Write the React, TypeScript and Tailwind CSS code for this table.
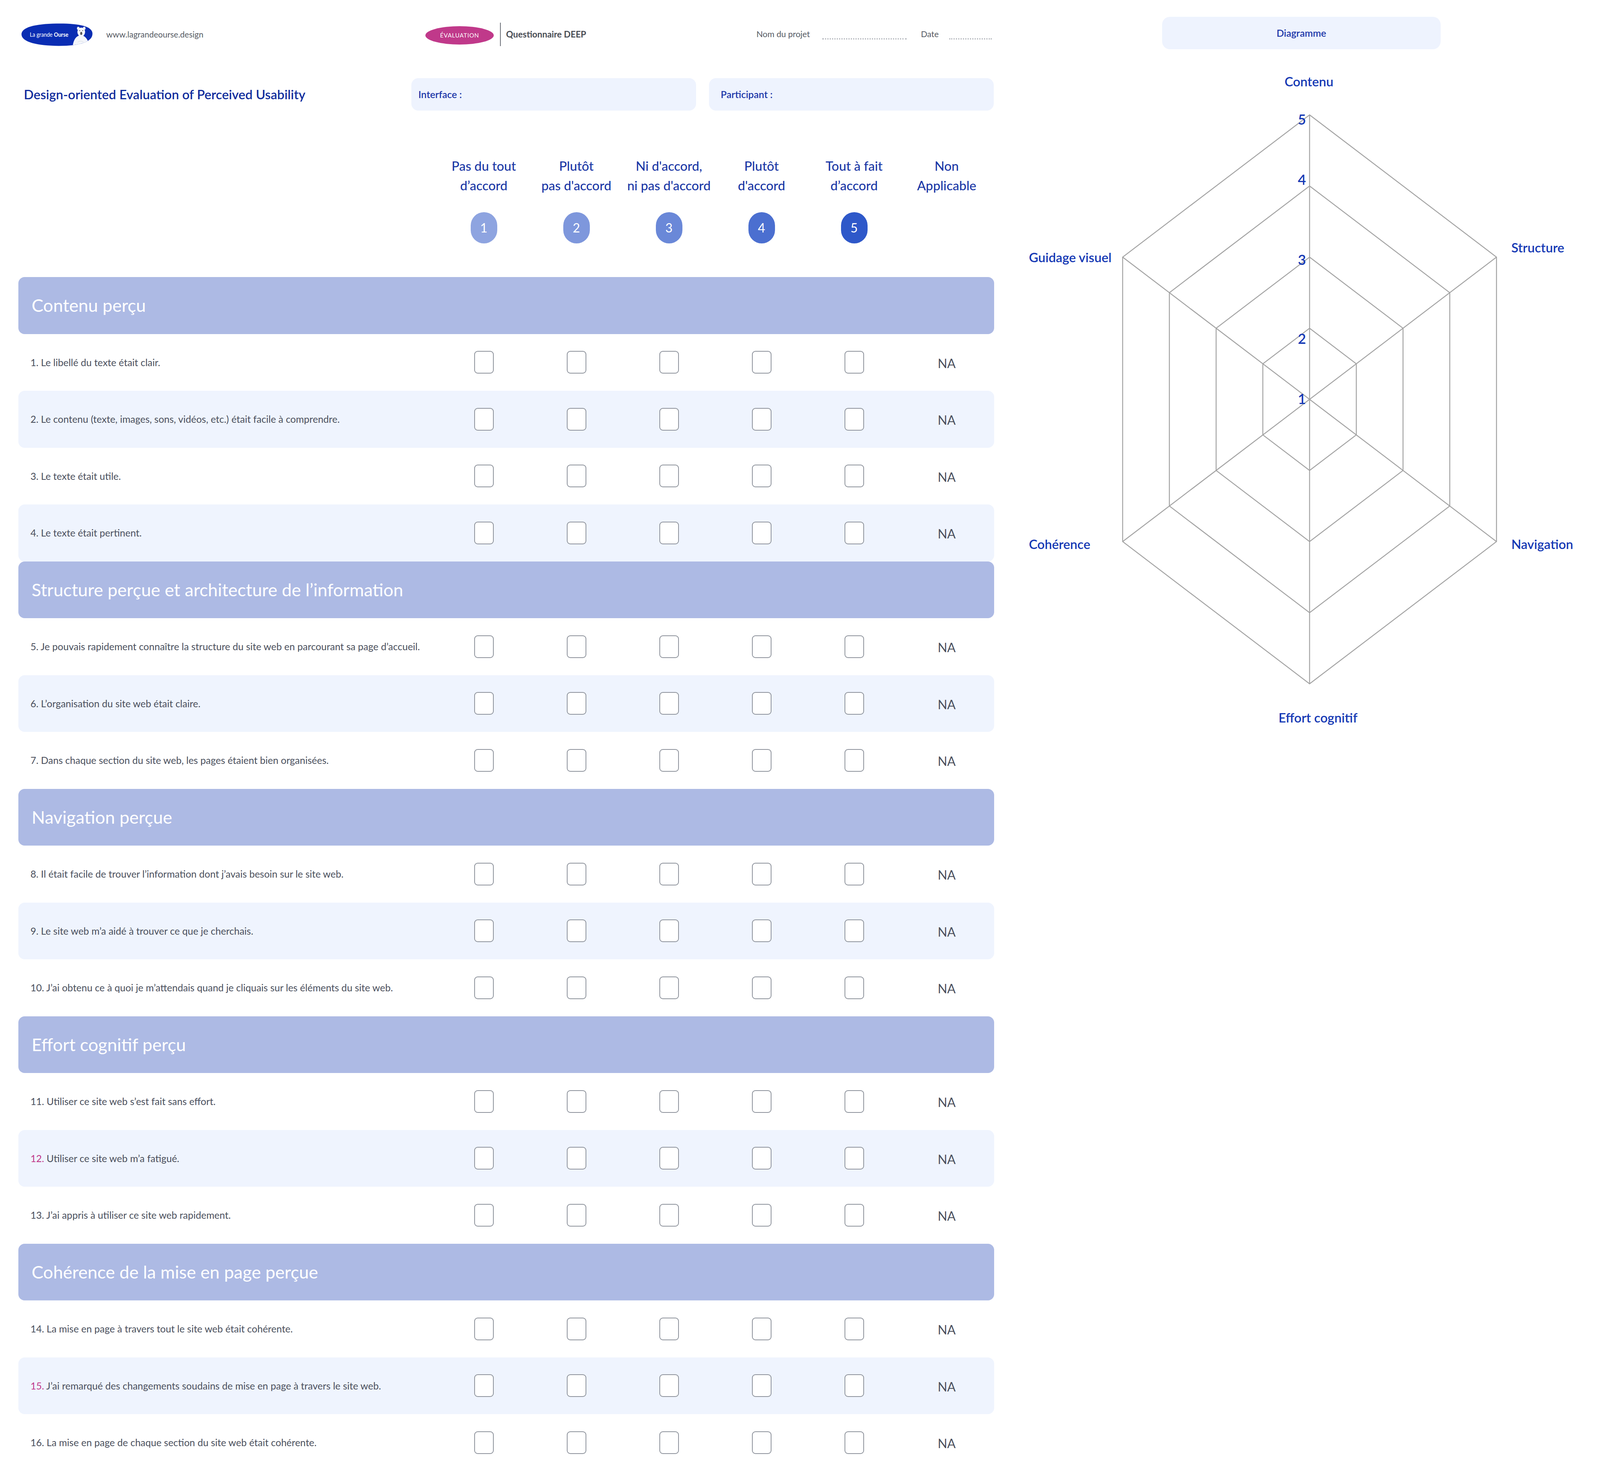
import React from "react";

const sections = [
  {
    title: "Contenu perçu",
    items: [
      { n: 1, t: "Le libellé du texte était clair." },
      { n: 2, t: "Le contenu (texte, images, sons, vidéos, etc.) était facile à comprendre." },
      { n: 3, t: "Le texte était utile." },
      { n: 4, t: "Le texte était pertinent." },
    ],
  },
  {
    title: "Structure perçue et architecture de l’information",
    items: [
      { n: 5, t: "Je pouvais rapidement connaître la structure du site web en parcourant sa page d’accueil." },
      { n: 6, t: "L’organisation du site web était claire." },
      { n: 7, t: "Dans chaque section du site web, les pages étaient bien organisées." },
    ],
  },
  {
    title: "Navigation perçue",
    items: [
      { n: 8, t: "Il était facile de trouver l’information dont j’avais besoin sur le site web." },
      { n: 9, t: "Le site web m’a aidé à trouver ce que je cherchais." },
      { n: 10, t: "J’ai obtenu ce à quoi je m’attendais quand je cliquais sur les éléments du site web." },
    ],
  },
  {
    title: "Effort cognitif perçu",
    items: [
      { n: 11, t: "Utiliser ce site web s’est fait sans effort." },
      { n: 12, t: "Utiliser ce site web m’a fatigué.", reverse: true },
      { n: 13, t: "J’ai appris à utiliser ce site web rapidement." },
    ],
  },
  {
    title: "Cohérence de la mise en page perçue",
    items: [
      { n: 14, t: "La mise en page à travers tout le site web était cohérente." },
      { n: 15, t: "J’ai remarqué des changements soudains de mise en page à travers le site web.", reverse: true },
      { n: 16, t: "La mise en page de chaque section du site web était cohérente." },
    ],
  },
];

const scale = [
  { label: ["Pas du tout", "d’accord"], color: "bg-[#8ea4e0]" },
  { label: ["Plutôt", "pas d'accord"], color: "bg-[#7e97dc]" },
  { label: ["Ni d'accord,", "ni pas d'accord"], color: "bg-[#6a88d8]" },
  { label: ["Plutôt", "d'accord"], color: "bg-[#4b6fd0]" },
  { label: ["Tout à fait", "d’accord"], color: "bg-[#2e58c9]" },
];

function Logo() {
  const blob = "M4 38 C2 16 50 6 122 5 C195 4 243 12 244 34 C245 58 205 71 130 71 C58 71 6 60 4 38Z";
  return (
    <svg width="187" height="64" viewBox="0 0 247 74" preserveAspectRatio="none">
      <defs>
        <clipPath id="blob">
          <path d={blob} />
        </clipPath>
      </defs>
      <path d={blob} fill="#0a2db3" />
      <text x="32" y="44" fontSize="18" fill="#fff" fontFamily="Lato, sans-serif">
        La grande <tspan fontWeight="700">Ourse</tspan>
      </text>
      <g clipPath="url(#blob)">
        <path d="M176 80 C178 56 186 44 200 40 C214 38 230 46 236 80 Z" fill="#f4f6fa" />
        <circle cx="196" cy="19" r="4.5" fill="#eef1f6" />
        <circle cx="216" cy="19" r="4.5" fill="#eef1f6" />
        <ellipse cx="206" cy="30" rx="13" ry="13" fill="#f7f8fb" />
        <circle cx="201" cy="26" r="1.3" fill="#333" />
        <circle cx="211" cy="26" r="1.3" fill="#333" />
        <ellipse cx="206" cy="34" rx="3.5" ry="4.5" fill="#555" />
        <path d="M194 60 C200 56 208 56 214 60" stroke="#ccd2dc" strokeWidth="1" fill="none" />
      </g>
    </svg>
  );
}

function Checkbox() {
  return <div className="h-[58px] w-[50px] rounded-[9px] border-[2px] border-[#8e939c] bg-white" />;
}

function Row({ n, t, reverse, shaded }: { n: number; t: string; reverse?: boolean; shaded: boolean }) {
  return (
    <div
      className={`grid h-[145.5px] grid-cols-[1073px_repeat(6,237px)] items-center rounded-[16px] ${
        shaded ? "bg-[#eff4fe]" : ""
      }`}
    >
      <p className="pl-[31px] text-[25px] text-[#4a4f5c]">
        <span className={reverse ? "text-[#c0398a]" : ""}>{n}.</span> {t}
      </p>
      {[0, 1, 2, 3, 4].map((i) => (
        <div key={i} className="flex justify-center">
          <Checkbox />
        </div>
      ))}
      <div className="pt-[5px] text-center text-[32px] text-[#4a4f5c]">NA</div>
    </div>
  );
}

function RadarChart() {
  // x in page px, y in page px (the frame is narrower than it is tall relative to the print)
  const cx = 807.5;
  const cy = 896;
  const R = 728;
  const kx = 0.759;
  const angles = [-90, -30, 30, 90, 150, 210].map((a) => (a * Math.PI) / 180);
  const px = (r: number, a: number) => cx + r * kx * Math.cos(a);
  const py = (r: number, a: number) => cy + r * Math.sin(a);
  const levels = [1, 2, 3, 4].map((k) => (R * k) / 4);
  const levelLabels = [
    { v: "5", y: 179 },
    { v: "4", y: 333 },
    { v: "3", y: 538 },
    { v: "2", y: 740 },
    { v: "1", y: 894 },
  ];
  const axes = [
    { t: "Contenu", x: 806, y: 82, anchor: "middle" },
    { t: "Structure", x: 1324, y: 507, anchor: "start" },
    { t: "Navigation", x: 1324, y: 1266, anchor: "start" },
    { t: "Effort cognitif", x: 829, y: 1710, anchor: "middle" },
    { t: "Cohérence", x: 89, y: 1266, anchor: "start" },
    { t: "Guidage visuel", x: 89, y: 532, anchor: "start" },
  ];
  return (
    <svg width="1551" height="1800" viewBox="0 0 1551 1800" fontFamily="Lato, sans-serif">
      {levels.map((r) => (
        <polygon
          key={r}
          points={angles.map((a) => `${px(r, a)},${py(r, a)}`).join(" ")}
          fill="none"
          stroke="#a3a3a3"
          strokeWidth="2.4"
        />
      ))}
      {angles.map((a, i) => (
        <line key={i} x1={cx} y1={cy} x2={px(R, a)} y2={py(R, a)} stroke="#a3a3a3" strokeWidth="2.4" />
      ))}
      {levelLabels.map((l) => (
        <text
          key={l.v}
          x={788}
          y={l.y}
          fontSize="36"
          fontWeight="600"
          fill="#1438b4"
          textAnchor="middle"
          dominantBaseline="central"
        >
          {l.v}
        </text>
      ))}
      {axes.map((a) => (
        <text
          key={a.t}
          x={a.x}
          y={a.y}
          fontSize="33"
          fontWeight="600"
          fill="#1438b4"
          textAnchor={a.anchor as "start" | "middle"}
          dominantBaseline="central"
        >
          {a.t}
        </text>
      ))}
    </svg>
  );
}

export default function App() {
  return (
    <div className="flex h-[3762px] w-[4096px] overflow-hidden bg-white font-['Lato',sans-serif]">
      {/* questionnaire */}
      <div className="ml-[47px] w-[2498px] shrink-0">
        <div className="mt-[46px] flex h-[83px] items-center">
          <div className="flex w-[1042px] items-center">
            <div className="ml-[5px] flex">
              <Logo />
            </div>
            <span className="ml-[33px] text-[21px] text-[#555a63]">www.lagrandeourse.design</span>
          </div>
          <div className="mt-[5px] flex h-[47px] w-[175px] items-center justify-center rounded-[50%] bg-[#c0398a] text-[15px] tracking-[0.8px] text-white">
            ÉVALUATION
          </div>
          <div className="ml-[16px] h-[60px] w-[1.5px] bg-[#6b6f77]" />
          <div className="w-[655px] pl-[14px] text-[22.5px] font-bold text-[#474b53]">Questionnaire DEEP</div>
          <span className="w-[168px] text-[21.5px] text-[#555a63]">Nom du projet</span>
          <div className="mt-[24px] w-[216px] border-b-[3px] border-dotted border-[#b3b6bc]" />
          <span className="ml-[37px] w-[72px] text-[21.5px] text-[#555a63]">Date</span>
          <div className="mt-[24px] w-[109px] border-b-[3px] border-dotted border-[#b3b6bc]" />
        </div>

        <div className="mt-[71px] flex h-[83px] items-center">
          <h1 className="w-[1006px] pl-[14px] text-[33px] font-semibold text-[#102c9c]">
            Design-oriented Evaluation of Perceived Usability
          </h1>
          <div className="flex h-[83px] w-[729px] items-center rounded-[18px] bg-[#eef3fe] pl-[18px] text-[25px] font-semibold text-[#1b36a8]">
            Interface :
          </div>
          <div className="ml-[33px] flex h-[83px] w-[729px] items-center rounded-[18px] bg-[#eef3fe] pl-[30px] text-[25px] font-semibold text-[#1b36a8]">
            Participant :
          </div>
        </div>

        <div className="mt-[116px] grid grid-cols-[1073px_repeat(6,237px)]">
          <div />
          {scale.map((s, i) => (
            <div key={i} className="flex flex-col items-center">
              <div className="h-[100px] text-center text-[33px] font-medium leading-[50px] text-[#1b38a6]">
                {s.label[0]}
                <br />
                {s.label[1]}
              </div>
              <div
                className={`mt-[44px] flex h-[80px] w-[68px] items-center justify-center rounded-full text-[32px] text-white ${s.color}`}
              >
                {i + 1}
              </div>
            </div>
          ))}
          <div className="h-[100px] text-center text-[33px] font-medium leading-[50px] text-[#1b38a6]">
            Non
            <br />
            Applicable
          </div>
        </div>

        <div className="mt-[86px]">
          {sections.map((sec) => (
            <div key={sec.title}>
              <div className="flex h-[145.5px] items-center rounded-[16px] bg-[#adbae4] pl-[34px] text-[45px] text-white">
                {sec.title}
              </div>
              {sec.items.map((it, j) => (
                <Row key={it.n} n={it.n} t={it.t} reverse={it.reverse} shaded={j % 2 === 1} />
              ))}
            </div>
          ))}
        </div>
      </div>

      {/* diagram */}
      <div className="flex-1 pt-[43px]">
        <div className="ml-[430px] flex h-[83px] w-[713px] items-center justify-center rounded-[20px] bg-[#eef3fe] text-[25px] font-semibold text-[#1b36a8]">
          Diagramme
        </div>
        <RadarChart />
      </div>
    </div>
  );
}
